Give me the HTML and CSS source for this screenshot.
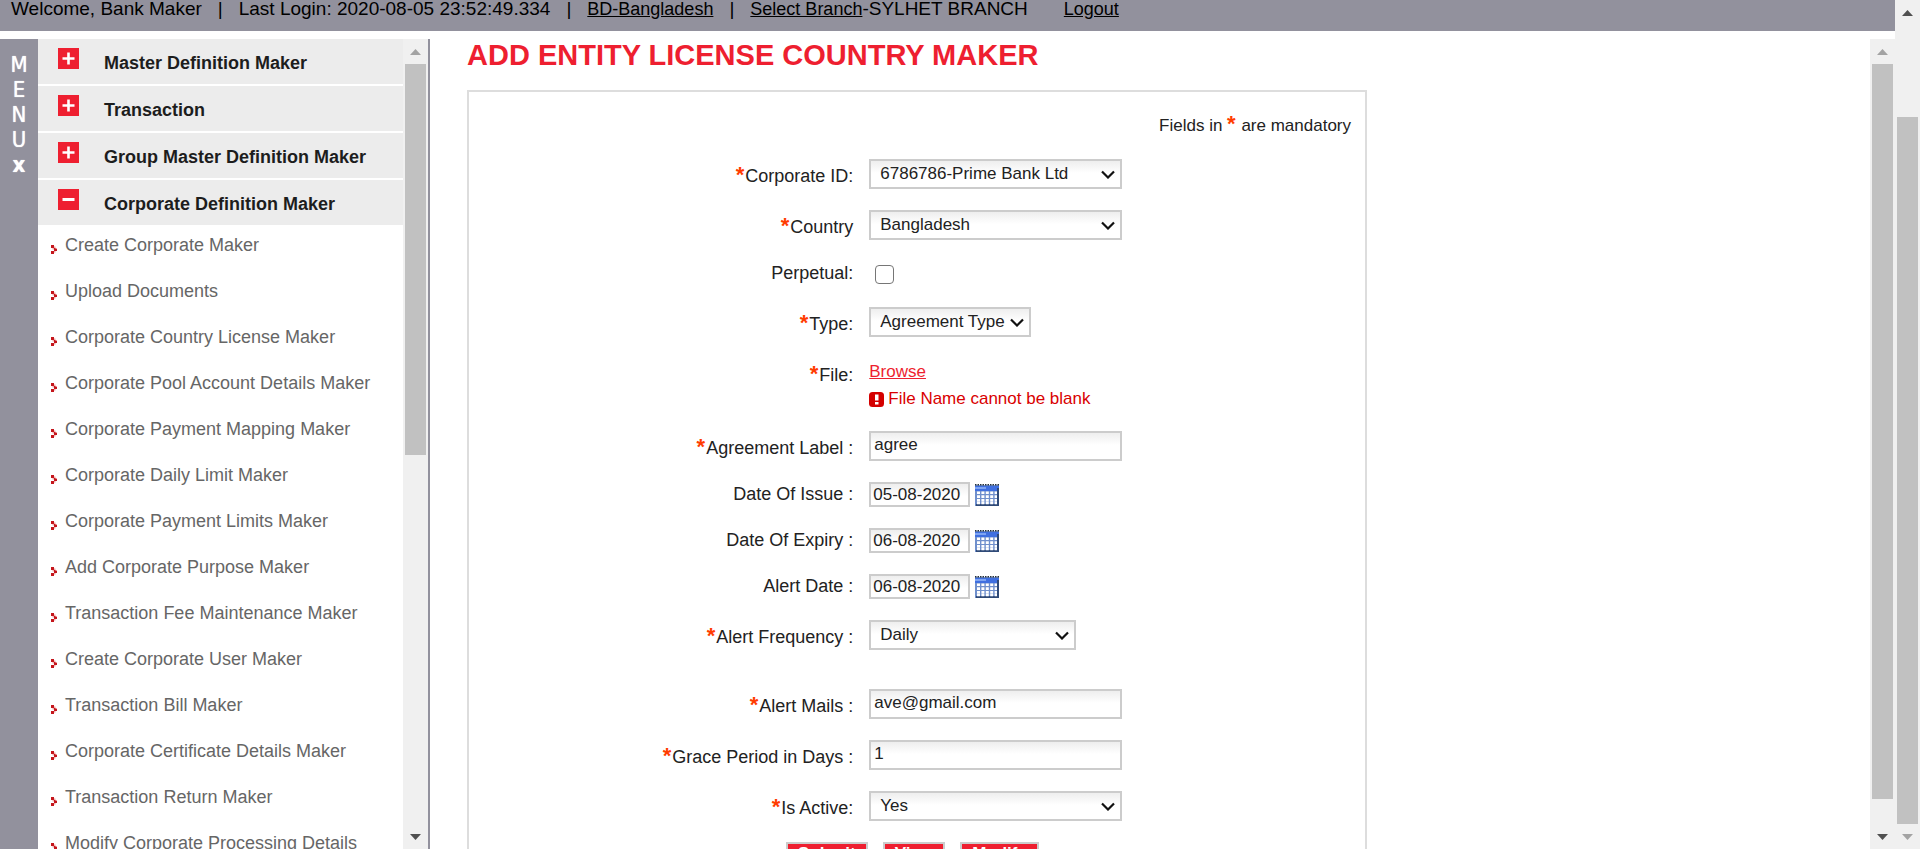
FILE: index.html
```html
<!DOCTYPE html>
<html lang="en">
<head>
<meta charset="utf-8">
<title>Add Entity License Country Maker</title>
<link rel="stylesheet" href="styles.css">
</head>
<body>
<svg class="sprite" aria-hidden="true">
  <symbol id="plus" viewBox="0 0 21 21"><rect width="21" height="21" fill="#ee1f30"/><path d="M4.500 10.500h12M10.500 4.500v12" stroke="#fff" stroke-width="2.600"/></symbol>
  <symbol id="minus" viewBox="0 0 21 21"><rect width="21" height="21" fill="#ee1f30"/><path d="M4.500 10.500h12" stroke="#fff" stroke-width="3"/></symbol>
  <symbol id="bullet" viewBox="0 0 6 9"><path d="M0 0h3v3H0zM3 3h3v3H3zM0 6h3v3H0z" fill="#c4161c"/><path d="M1.500 3H3v1.500H1.500zM3 1.500h1.500V3H3zM3 6h1.500v1.500H3zM4.500 3H6v1h-1.500z" fill="#f0a5a5"/></symbol>
  <symbol id="up" viewBox="0 0 11 6"><path d="M0 6 5.500 0 11 6z" fill="currentColor"/></symbol>
  <symbol id="down" viewBox="0 0 11 6"><path d="M0 0 5.500 6 11 0z" fill="currentColor"/></symbol>
  <symbol id="error" viewBox="0 0 15 15"><rect width="15" height="15" rx="3.500" fill="#d40000"/><path d="M6 2.500h3.500v6H6zM6 10h3.500v2.500H6z" fill="#fff"/></symbol>
  <symbol id="calendar" viewBox="0 0 24 22">
    <rect y="1" width="24" height="21" fill="#6f8fcc"/>
    <rect y="2" width="24" height="5" fill="#3f6fe0"/>
    <rect y="3" width="11" height="2" fill="#7ea4f2"/>
    <path d="M0 .7h24" stroke="#26323f" stroke-width="1.500" stroke-dasharray="1.500 1"/>
    <path d="M23 4v17H1" fill="none" stroke="#2f4a78" stroke-width="2"/>
    <path d="M2 8.700h20M2 12.600h20M2 16.300h20M2 19h20" stroke="#fff" stroke-width="2.600" stroke-dasharray="3 1.400"/>
  </symbol>
</svg>
<div class="page">
  <div class="window">
    <header class="topbar">
      <span class="crumb">Welcome, Bank Maker</span><span class="sep">|</span>
      <span class="crumb">Last Login: 2020-08-05 23:52:49.334</span><span class="sep">|</span>
      <a href="#">BD-Bangladesh</a><span class="sep">|</span>
      <a href="#">Select Branch</a><span class="crumb">-SYLHET BRANCH</span>
      <a class="logout" href="#">Logout</a>
    </header>
    <div class="frames">
      <aside class="sidebar">
        <div class="strip"><span>M</span><span>E</span><span>N</span><span>U</span><span class="close">x</span></div>
        <nav class="nav">
          <a class="group" href="#"><svg><use href="#plus"/></svg>Master Definition Maker</a>
          <a class="group" href="#"><svg><use href="#plus"/></svg>Transaction</a>
          <a class="group" href="#"><svg><use href="#plus"/></svg>Group Master Definition Maker</a>
          <a class="group open" href="#"><svg><use href="#minus"/></svg>Corporate Definition Maker</a>
          <a class="item" href="#"><svg><use href="#bullet"/></svg>Create Corporate Maker</a>
          <a class="item" href="#"><svg><use href="#bullet"/></svg>Upload Documents</a>
          <a class="item" href="#"><svg><use href="#bullet"/></svg>Corporate Country License Maker</a>
          <a class="item" href="#"><svg><use href="#bullet"/></svg>Corporate Pool Account Details Maker</a>
          <a class="item" href="#"><svg><use href="#bullet"/></svg>Corporate Payment Mapping Maker</a>
          <a class="item" href="#"><svg><use href="#bullet"/></svg>Corporate Daily Limit Maker</a>
          <a class="item" href="#"><svg><use href="#bullet"/></svg>Corporate Payment Limits Maker</a>
          <a class="item" href="#"><svg><use href="#bullet"/></svg>Add Corporate Purpose Maker</a>
          <a class="item" href="#"><svg><use href="#bullet"/></svg>Transaction Fee Maintenance Maker</a>
          <a class="item" href="#"><svg><use href="#bullet"/></svg>Create Corporate User Maker</a>
          <a class="item" href="#"><svg><use href="#bullet"/></svg>Transaction Bill Maker</a>
          <a class="item" href="#"><svg><use href="#bullet"/></svg>Corporate Certificate Details Maker</a>
          <a class="item" href="#"><svg><use href="#bullet"/></svg>Transaction Return Maker</a>
          <a class="item" href="#"><svg><use href="#bullet"/></svg>Modify Corporate Processing Details</a>
        </nav>
        <div class="scrollbar">
          <svg class="off"><use href="#up"/></svg>
          <div class="track"><div class="thumb" style="flex-grow:391"></div><div style="flex-grow:369"></div></div>
          <svg><use href="#down"/></svg>
        </div>
      </aside>
      <main class="main">
        <h1>ADD ENTITY LICENSE COUNTRY MAKER</h1>
        <form class="panel">
          <p class="note">Fields in <b class="star">*</b> are mandatory</p>
          <div class="row">
            <label class="req" for="corp"><b class="star">*</b>Corporate ID:</label>
            <select id="corp"><option>6786786-Prime Bank Ltd</option></select>
          </div>
          <div class="row">
            <label class="req" for="country"><b class="star">*</b>Country</label>
            <select id="country"><option>Bangladesh</option></select>
          </div>
          <div class="row">
            <label for="perpetual">Perpetual:</label>
            <input class="check" type="checkbox" id="perpetual">
          </div>
          <div class="row">
            <label class="req" for="type"><b class="star">*</b>Type:</label>
            <select class="short" id="type"><option>Agreement Type</option></select>
          </div>
          <div class="row">
            <span class="label req"><b class="star">*</b>File:</span>
            <div class="file">
              <a href="#">Browse</a>
              <span class="error"><svg><use href="#error"/></svg>File Name cannot be blank</span>
            </div>
          </div>
          <div class="row">
            <label class="req" for="agree"><b class="star">*</b>Agreement Label :</label>
            <input class="text" type="text" id="agree" value="agree">
          </div>
          <div class="row">
            <label for="issue">Date Of Issue :</label>
            <div class="date"><input type="text" id="issue" value="05-08-2020"><button type="button" aria-label="Pick date of issue"><svg><use href="#calendar"/></svg></button></div>
          </div>
          <div class="row">
            <label for="expiry">Date Of Expiry :</label>
            <div class="date"><input type="text" id="expiry" value="06-08-2020"><button type="button" aria-label="Pick date of expiry"><svg><use href="#calendar"/></svg></button></div>
          </div>
          <div class="row">
            <label for="alert">Alert Date :</label>
            <div class="date"><input type="text" id="alert" value="06-08-2020"><button type="button" aria-label="Pick alert date"><svg><use href="#calendar"/></svg></button></div>
          </div>
          <div class="row spaced">
            <label class="req" for="freq"><b class="star">*</b>Alert Frequency :</label>
            <select class="medium" id="freq"><option>Daily</option></select>
          </div>
          <div class="row">
            <label class="req" for="mails"><b class="star">*</b>Alert Mails :</label>
            <input class="text" type="text" id="mails" value="ave@gmail.com">
          </div>
          <div class="row">
            <label class="req" for="grace"><b class="star">*</b>Grace Period in Days :</label>
            <input class="text" type="text" id="grace" value="1">
          </div>
          <div class="row">
            <label class="req" for="active"><b class="star">*</b>Is Active:</label>
            <select id="active"><option>Yes</option></select>
          </div>
          <div class="actions">
            <button type="submit">Submit</button>
            <button type="button">View</button>
            <button type="button">Modify</button>
          </div>
        </form>
      </main>
      <div class="scrollbar">
        <svg class="off"><use href="#up"/></svg>
        <div class="track"><div class="thumb" style="flex-grow:735"></div><div style="flex-grow:25"></div></div>
        <svg><use href="#down"/></svg>
      </div>
    </div>
  </div>
  <div class="scrollbar">
    <svg><use href="#up"/></svg>
    <div class="track"><div style="flex-grow:92"></div><div class="thumb" style="flex-grow:707"></div></div>
    <svg class="off"><use href="#down"/></svg>
  </div>
</div>
</body>
</html>
```

FILE: styles.css
```css
* { box-sizing: border-box; }

body {
  margin: 0;
  background: #fff;
  color: #222;
  font-family: "Liberation Sans", Arial, sans-serif;
  font-size: 18px;
}

.sprite { position: absolute; width: 0; height: 0; }

.page { display: flex; height: 100vh; overflow: hidden; }
.window { flex: 1; min-width: 0; display: flex; flex-direction: column; gap: 8px; }

.topbar {
  display: flex;
  flex: none;
  align-items: baseline;
  padding: 0 11px 13px;
  background: #92919d;
  color: #000;
  font-size: 19px;
  line-height: 17px;
  white-space: nowrap;
}
.topbar a { color: #000; font-size: 18px; }
.topbar .sep { margin: 0 16px; }
.topbar .logout { margin-left: 36px; }

.frames { flex: 1; min-height: 0; display: flex; }

.sidebar {
  flex: none;
  display: flex;
  width: 430px;
  border-right: 2px solid #92919d;
}
.strip {
  flex: none;
  display: flex;
  flex-direction: column;
  align-items: center;
  width: 38px;
  padding-top: 13px;
  background: #92919d;
  color: #fff;
  font-family: "DejaVu Sans Condensed", "Open Sans", sans-serif;
  font-size: 22px;
  line-height: 25px;
  text-shadow: 0 0 1px #fff;
}
.strip .close { font-weight: bold; }

.nav { flex: 1; min-width: 0; overflow: hidden; white-space: nowrap; }
.nav a { display: flex; align-items: flex-start; text-decoration: none; }
.group {
  gap: 25px;
  margin-bottom: 2px;
  padding: 3px 0 0 20px;
  background: #ececec;
  color: #1d1d1d;
  font-weight: bold;
  line-height: 42px;
}
.group.open { margin-bottom: 0; }
.group svg { flex: none; width: 21px; height: 21px; margin-top: 6px; }
.item {
  gap: 8px;
  margin-bottom: 6px;
  padding-left: 13px;
  color: #666;
  line-height: 40px;
}
.item svg { flex: none; width: 6px; height: 9px; margin-top: 20px; }

.scrollbar {
  flex: none;
  display: flex;
  flex-direction: column;
  align-items: center;
  width: 25px;
  background: #f0f0f0;
  color: #505050;
}
.scrollbar svg { flex: none; width: 11px; height: 6px; margin: 10px 0 9px; }
.scrollbar .off { color: #a3a3a3; }
.track { flex: 1; display: flex; flex-direction: column; width: 21px; }
.thumb { background: #c1c1c1; }

.main { flex: 1; min-width: 0; overflow: hidden; padding: 0 37px; }
.main h1 {
  margin: 0 0 19px;
  color: #ee1f30;
  font-size: 29px;
  line-height: 32px;
}

.panel {
  max-width: 900px;
  padding: 21px 0 30px;
  border: 2px solid #ddd;
}
.note {
  margin: 0 14px 20px;
  font-size: 17px;
  line-height: 26px;
  text-align: right;
}
.star {
  margin-right: 1px;
  color: #ff3c00;
  font-size: 22px;
  line-height: 20px;
}

.row {
  display: grid;
  grid-template-columns: calc(43% - 1px) 1fr;
  column-gap: 16px;
  align-items: start;
  justify-items: start;
  margin-bottom: 21px;
}
.row.spaced { margin-bottom: 39px; }
.row label, .row .label { justify-self: end; line-height: 25px; }
.row .req { padding-top: 4px; line-height: 26px; }

select, input {
  margin: 0;
  border: 2px solid #ccc;
  border-radius: 0;
  background: linear-gradient(#eee, #fff 12px);
  color: #222;
  font: 17px "Liberation Sans", Arial, sans-serif;
}
select, .text { width: 253px; height: 30px; }
select {
  appearance: none;
  padding: 0 22px 2px 9px;
  background:
    url("data:image/svg+xml,%3Csvg xmlns='http://www.w3.org/2000/svg' width='14' height='9'%3E%3Cpath d='M1 1.500 7 7.500 13 1.500' fill='none' stroke='%23111' stroke-width='2.200'/%3E%3C/svg%3E") right 5px center no-repeat,
    linear-gradient(#eee, #fff 12px);
}
.short { width: 162px; }
.medium { width: 207px; }
.text { padding: 0 3px 2px; }

.check {
  appearance: none;
  width: 19px;
  height: 19px;
  margin: 4px 0 2px 6px;
  border: 1px solid #767676;
  border-radius: 4px;
  background: #fff;
}

.file { display: flex; flex-direction: column; align-items: flex-start; font-size: 17px; }
.file a { color: #ee1f30; line-height: 28px; }
.error { display: flex; align-items: center; gap: 4px; padding-top: 2px; color: #d90000; line-height: 22px; }
.error svg { width: 15px; height: 15px; }

.date { display: flex; align-items: center; gap: 5px; }
.date input { width: 101px; height: 25px; padding: 0 2px; }
.date button { width: 24px; height: 22px; padding: 0; border: 0; background: none; }
.date svg { display: block; width: 24px; height: 22px; }

.actions {
  display: flex;
  justify-content: center;
  gap: 15px;
  padding-right: 9px;
}
.actions button {
  padding: 0 10px 4px;
  border: 2px solid #ccc;
  background: #ee1f30;
  color: #fff;
  font: bold 17px/20px "Liberation Sans", Arial, sans-serif;
}
```
